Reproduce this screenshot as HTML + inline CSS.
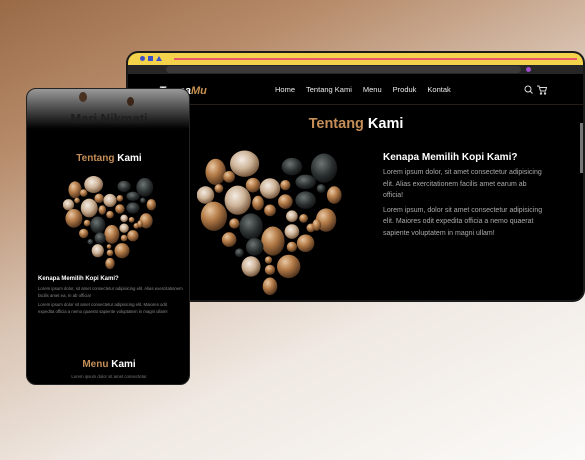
<!DOCTYPE html>
<html><head><meta charset="utf-8"><style>
*{margin:0;padding:0;box-sizing:border-box}
body{width:585px;height:460px;overflow:hidden;position:relative;font-family:"Liberation Sans",sans-serif;
background:linear-gradient(155deg,#9a6a46 0%,#b88d6c 22%,#d9c4b3 45%,#f0e9e3 68%,#fbfaf8 100%)}
.win{position:absolute;left:126px;top:51px;width:459px;height:251px;border-radius:12px;background:#000;border:2px solid #1a1a1a;overflow:hidden}
.ybar{position:absolute;left:0;top:0;right:0;height:12px;background:#f3d24c}
.pink{position:absolute;left:46px;right:6px;top:5px;height:2px;background:#e8586a}
.addr{position:absolute;left:0;right:0;top:12px;height:9px;background:#262626}
.pill{position:absolute;left:38px;width:355px;top:1px;height:7px;border-radius:4px;background:#3a3a3a}
.nav{position:absolute;top:21px;left:0;right:0;height:31px;border-bottom:1px solid #2a1d14}
.logo{position:absolute;left:31px;top:11px;font-weight:bold;font-style:italic;font-size:11px;color:#fff}
.logo span{color:#c8914e}
.links{position:absolute;left:147px;top:11px;font-size:7.5px;color:#eee;word-spacing:0}
.links b{font-weight:normal;margin-right:11px}
.t{font-weight:bold;color:#fff}
.t span{color:#c48e58}
.p{color:#aaa;font-size:7px;line-height:11.5px}
.phone{position:absolute;left:26px;top:88px;width:164px;height:297px;border-radius:10px;background:#000;overflow:hidden;border:1px solid #222}
</style></head><body>
<svg width="0" height="0" style="position:absolute">
<defs>
<radialGradient id="b" cx="35%" cy="30%" r="75%"><stop offset="0" stop-color="#e8c8a4"/><stop offset=".45" stop-color="#b57c48"/><stop offset="1" stop-color="#4a2e1a"/></radialGradient>
<radialGradient id="c" cx="40%" cy="35%" r="70%"><stop offset="0" stop-color="#f4ece4"/><stop offset=".5" stop-color="#cdb397"/><stop offset="1" stop-color="#6a4a30"/></radialGradient>
<radialGradient id="d" cx="40%" cy="35%" r="70%"><stop offset="0" stop-color="#6d7474"/><stop offset=".6" stop-color="#2a2f2f"/><stop offset="1" stop-color="#111"/></radialGradient>
<symbol id="h" viewBox="0 0 100 100">
<ellipse cx="12.8" cy="13.6" rx="7" ry="9" fill="url(#b)"/>
<ellipse cx="32.6" cy="8" rx="10" ry="9" fill="url(#c)"/>
<ellipse cx="22" cy="17" rx="4" ry="4" fill="url(#b)"/>
<ellipse cx="65" cy="10" rx="7" ry="6" fill="url(#d)"/>
<ellipse cx="87" cy="11" rx="9" ry="10" fill="url(#d)"/>
<ellipse cx="5.8" cy="29.5" rx="6" ry="6" fill="url(#c)"/>
<ellipse cx="15" cy="25" rx="3" ry="3" fill="url(#b)"/>
<ellipse cx="27.9" cy="33" rx="9" ry="10" fill="url(#c)"/>
<ellipse cx="38.4" cy="22.7" rx="5" ry="5" fill="url(#b)"/>
<ellipse cx="50" cy="25" rx="7" ry="7" fill="url(#c)"/>
<ellipse cx="60.5" cy="22.7" rx="3.5" ry="3.5" fill="url(#b)"/>
<ellipse cx="74.4" cy="20.5" rx="7" ry="5" fill="url(#d)"/>
<ellipse cx="85" cy="25" rx="3" ry="3" fill="url(#d)"/>
<ellipse cx="94" cy="29.5" rx="5" ry="6" fill="url(#b)"/>
<ellipse cx="41.8" cy="35" rx="4" ry="5" fill="url(#b)"/>
<ellipse cx="60.5" cy="34" rx="5" ry="5" fill="url(#b)"/>
<ellipse cx="74.4" cy="33" rx="7" ry="6" fill="url(#d)"/>
<ellipse cx="11.6" cy="44" rx="9" ry="10" fill="url(#b)"/>
<ellipse cx="50" cy="40" rx="4" ry="4" fill="url(#b)"/>
<ellipse cx="88.4" cy="46.6" rx="7" ry="8" fill="url(#b)"/>
<ellipse cx="65" cy="44" rx="4" ry="4" fill="url(#c)"/>
<ellipse cx="73" cy="45.5" rx="3" ry="3" fill="url(#b)"/>
<ellipse cx="37" cy="51" rx="8" ry="9" fill="url(#d)"/>
<ellipse cx="25.6" cy="49" rx="3.5" ry="3.5" fill="url(#b)"/>
<ellipse cx="52" cy="61" rx="8" ry="10" fill="url(#b)"/>
<ellipse cx="65" cy="54.5" rx="5" ry="5" fill="url(#c)"/>
<ellipse cx="78" cy="52" rx="3" ry="3" fill="url(#b)"/>
<ellipse cx="82" cy="50" rx="3" ry="4" fill="url(#b)"/>
<ellipse cx="74.4" cy="62.5" rx="6" ry="6" fill="url(#b)"/>
<ellipse cx="22" cy="60" rx="5" ry="5" fill="url(#b)"/>
<ellipse cx="39.5" cy="65" rx="6" ry="6" fill="url(#d)"/>
<ellipse cx="65" cy="65" rx="3.5" ry="3.5" fill="url(#b)"/>
<ellipse cx="29" cy="69" rx="3" ry="3" fill="url(#d)"/>
<ellipse cx="37" cy="78.4" rx="6.5" ry="7" fill="url(#c)"/>
<ellipse cx="62.8" cy="78.4" rx="8" ry="8" fill="url(#b)"/>
<ellipse cx="50" cy="80.7" rx="3.5" ry="3.5" fill="url(#b)"/>
<ellipse cx="49" cy="74" rx="2.5" ry="2.5" fill="url(#b)"/>
<ellipse cx="50" cy="92" rx="5" ry="6" fill="url(#b)"/>
</symbol></defs></svg>

<div class="win">
 <div class="ybar"><div class="pink"></div>
  <div style="position:absolute;left:12px;top:3px;width:5px;height:5px;border-radius:50%;background:#3e4fcc"></div>
  <div style="position:absolute;left:20px;top:3px;width:5px;height:5px;background:#3e4fcc"></div>
  <div style="position:absolute;left:28px;top:3px;width:0;height:0;border-left:3px solid transparent;border-right:3px solid transparent;border-bottom:5px solid #3e4fcc"></div>
 </div>
 <div class="addr"><div class="pill"></div><div style="position:absolute;left:398px;top:2px;width:5px;height:5px;border-radius:50%;background:#a04ad0"></div></div>
 <div class="nav">
  <div class="logo">Tanpa<span>Mu</span></div>
  <div class="links"><b>Home</b><b>Tentang Kami</b><b>Menu</b><b>Produk</b><b>Kontak</b></div>
  <svg style="position:absolute;left:396px;top:11px" width="24" height="10" viewBox="0 0 24 10" fill="none" stroke="#ddd" stroke-width="1"><circle cx="4" cy="4" r="3"/><path d="M6 6l2.5 2.5"/><path d="M13 1h2l1.5 5h5l1-3.5h-6.5"/><circle cx="17" cy="8.5" r=".7"/><circle cx="21" cy="8.5" r=".7"/></svg>
 </div>
 <div style="position:absolute;right:0;top:70px;width:3px;height:50px;background:#777"></div>
 <div class="t" style="position:absolute;left:0;width:456px;text-align:center;top:63px;font-size:14.5px"><span>Tentang</span> Kami</div>
 <svg style="position:absolute;left:69px;top:97px" width="146" height="150"><use href="#h" width="146" height="150"/></svg>
 <div style="position:absolute;left:255px;top:99px;width:160px">
  <div class="t" style="font-size:10px;margin-bottom:4px;white-space:nowrap">Kenapa Memilih Kopi Kami?</div>
  <div class="p">Lorem ipsum dolor, sit amet consectetur adipisicing elit. Alias exercitationem facilis amet earum ab officia!</div>
  <div class="p" style="margin-top:3px">Lorem ipsum, dolor sit amet consectetur adipisicing elit. Maiores odit expedita officia a nemo quaerat sapiente voluptatem in magni ullam!</div>
 </div>
</div>

<div class="phone">
 <div style="position:absolute;left:0;top:0;width:164px;height:40px;background:linear-gradient(180deg,#9a9a9a 0%,#5a5a5a 40%,#000 100%)"></div>
 <div style="position:absolute;left:52px;top:3px;width:8px;height:10px;border-radius:50%;background:#4a3222"></div>
 <div style="position:absolute;left:100px;top:8px;width:7px;height:9px;border-radius:50%;background:#3a2518"></div>
 <div style="position:absolute;left:0;width:164px;text-align:center;top:22px;font-size:13px;font-weight:bold;color:#1e1e1e">Mari Nikmati</div>
 <div class="t" style="position:absolute;left:0;width:164px;text-align:center;top:64px;font-size:10px"><span>Tentang</span> Kami</div>
 <svg style="position:absolute;left:36px;top:87px" width="94" height="96"><use href="#h" width="94" height="96"/></svg>
 <div style="position:absolute;left:11px;top:187px;width:145px">
  <div class="t" style="font-size:6px;margin-bottom:3px">Kenapa Memilih Kopi Kami?</div>
  <div class="p" style="font-size:4.3px;line-height:7px;color:#888">Lorem ipsum dolor, sit amet consectetur adipisicing elit. Alias exercitationem facilis amet ea, m ab officia!</div>
  <div class="p" style="font-size:4.3px;line-height:7px;color:#888;margin-top:2px">Lorem ipsum dolor sit amet consectetur adipisicing elit. Maiores odit expedita officia a nemo quaerat sapiente voluptatem in magni ullam!</div>
 </div>
 <div class="t" style="position:absolute;left:0;width:164px;text-align:center;top:270px;font-size:10px"><span>Menu</span> Kami</div>
 <div class="p" style="position:absolute;left:0;width:164px;text-align:center;top:285px;font-size:4.3px;line-height:6px;color:#777">Lorem ipsum dolor sit amet consectetur</div>
</div>
</body></html>
